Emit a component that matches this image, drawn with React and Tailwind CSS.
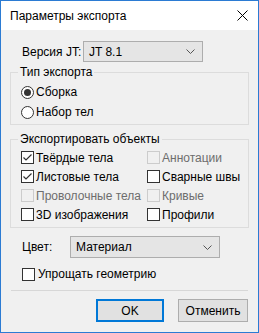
import React from "react";

function Check({ checked, disabled }) {
  return (
    <span
      className={
        "w-[13px] h-[13px] shrink-0 border flex items-center justify-center " +
        (disabled ? "border-[#cccccc] bg-[#f0f0f0]" : "border-[#333333] bg-white")
      }
    >
      {checked && (
        <svg width="11" height="11" viewBox="0 0 11 11">
          <polyline points="1.5,5.5 4,8 9.5,2.5" fill="none" stroke="#333333" strokeWidth="1.2" />
        </svg>
      )}
    </span>
  );
}

function CheckRow({ label, checked, disabled }) {
  return (
    <div className="h-[19px] flex items-center">
      <Check checked={checked} disabled={disabled} />
      <span className={"ml-[2px] " + (disabled ? "text-[#6d6d6d]" : "text-black")}>{label}</span>
    </div>
  );
}

function Radio({ label, checked }) {
  return (
    <div className="h-[20px] flex items-center">
      <span className="w-[13px] h-[13px] rounded-full border border-[#333333] bg-white flex items-center justify-center shrink-0">
        {checked && <span className="w-[7px] h-[7px] rounded-full bg-[#333333]" />}
      </span>
      <span className="ml-[2px]">{label}</span>
    </div>
  );
}

function Chevron() {
  return (
    <svg width="9" height="5" viewBox="0 0 9 5">
      <polyline points="0.5,0.5 4.5,4.5 8.5,0.5" fill="none" stroke="#555555" strokeWidth="1" />
    </svg>
  );
}

export default function App() {
  return (
    <div
      className="w-[259px] h-[333px] border border-[#2b7bd3] bg-[#f0f0f0] flex flex-col text-[12px] leading-[16px] text-black"
      style={{ fontFamily: '"Liberation Sans", Arial, sans-serif' }}
    >
      <div className="h-[29px] bg-white flex items-center justify-between pl-[9px] pr-[10px] shrink-0">
        <span className="text-[12px]">Параметры экспорта</span>
        <svg width="11" height="11" viewBox="0 0 11 11">
          <line x1="0.5" y1="0.5" x2="10.5" y2="10.5" stroke="#000" strokeWidth="1" />
          <line x1="10.5" y1="0.5" x2="0.5" y2="10.5" stroke="#000" strokeWidth="1" />
        </svg>
      </div>

      <div className="flex flex-col px-[9px]">
        <div className="mt-[11px] h-[21px] flex items-center pl-[12px]">
          <span className="w-[61px]">Версия JT:</span>
          <div className="w-[120px] h-[21px] border border-[#adadad] bg-[#e5e5e5] flex items-center justify-between pl-[5px] pr-[7px]">
            <span>JT 8.1</span>
            <Chevron />
          </div>
        </div>

        <fieldset className="mt-[2px] border border-[#dcdcdc] pl-[10px] pb-[2px]">
          <legend className="ml-[-3px] px-[2px] leading-[16px]">Тип экспорта</legend>
          <div className="mt-[2px] flex flex-col">
            <Radio label="Сборка" checked />
            <Radio label="Набор тел" />
          </div>
        </fieldset>

        <fieldset className="mt-[6px] border border-[#dcdcdc] pl-[10px] pb-[3px]">
          <legend className="ml-[-3px] px-[2px] leading-[16px]">Экспортировать объекты</legend>
          <div className="mt-[1px] grid grid-cols-[126px_1fr]">
            <CheckRow label="Твёрдые тела" checked />
            <CheckRow label="Аннотации" disabled />
            <CheckRow label="Листовые тела" checked />
            <CheckRow label="Сварные швы" />
            <CheckRow label="Проволочные тела" disabled />
            <CheckRow label="Кривые" disabled />
            <CheckRow label="3D изображения" />
            <CheckRow label="Профили" />
          </div>
        </fieldset>

        <div className="mt-[8px] h-[22px] flex items-center pl-[12px]">
          <span className="w-[48px]">Цвет:</span>
          <div className="w-[150px] h-[22px] border border-[#adadad] bg-[#e5e5e5] flex items-center justify-between pl-[5px] pr-[7px]">
            <span>Материал</span>
            <Chevron />
          </div>
        </div>

        <div className="mt-[8px] h-[16px] flex items-center pl-[12px]">
          <Check />
          <span className="ml-[3px]">Упрощать геометрию</span>
        </div>

        <div className="mt-[8px] h-px bg-[#d7d7d7] mx-[1px]" />

        <div className="mt-[8px] h-[23px] flex justify-end gap-[14px] pr-[1px]">
          <button className="w-[68px] h-[23px] border-2 border-[#0078d7] bg-[#e1e1e1] flex items-center justify-center">
            OK
          </button>
          <button className="w-[70px] h-[23px] border border-[#adadad] bg-[#e1e1e1] flex items-center justify-center">
            Отменить
          </button>
        </div>
      </div>
    </div>
  );
}
